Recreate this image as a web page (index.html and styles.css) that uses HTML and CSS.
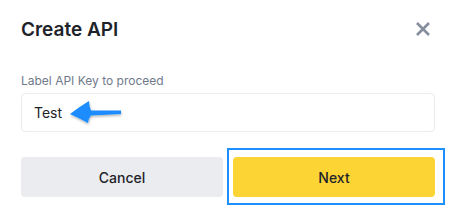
FILE: index.html
```html
<!DOCTYPE html>
<html lang="en">
<head>
    <meta charset="UTF-8">
    <title>Create API</title>
    <link rel="stylesheet" href="styles.css">
</head>
<body>
    <div class="dialog">
        <div class="dialog-header">
            <h2>Create API</h2>
            <button class="close-btn" aria-label="Close">
                <svg width="14" height="14" viewBox="0 0 14 14">
                    <path d="M1 1 L13 13 M13 1 L1 13" stroke="#848e9c" stroke-width="2.6"/>
                </svg>
            </button>
        </div>

        <label class="field-label" for="labelInput">Label API Key to proceed</label>
        <div class="field">
            <input type="text" id="labelInput" value="Test">
            <!-- annotation arrow -->
            <svg class="hint-arrow" width="60" height="30" viewBox="0 0 60 30">
                <defs>
                    <filter id="shadow" x="-20%" y="-30%" width="140%" height="160%">
                        <feDropShadow dx="0.5" dy="1.5" stdDeviation="1" flood-color="#000" flood-opacity="0.3"/>
                    </filter>
                </defs>
                <path d="M3 15 Q12 8 22 2 Q22 7 24 11.5 L54 11.5 L54 15 L24 16.5 Q21 20 21 24 Q12 19 3 15 Z" fill="#1a8cff" filter="url(#shadow)"/>
            </svg>
        </div>

        <div class="actions">
            <button class="btn btn-cancel">Cancel</button>
            <button class="btn btn-next">Next</button>
            <div class="highlight"></div>
        </div>
    </div>
</body>
</html>
```

FILE: styles.css
```css
body {
    margin: 0;
    background: #fff;
    font-family: 'Inter', 'Liberation Sans', sans-serif;
    color: #1e2329;
}
.dialog {
    width: 456px;
    height: 216px;
    box-sizing: border-box;
    padding: 15px 21px 0;
}
.dialog-header {
    display: flex;
    align-items: center;
    justify-content: space-between;
    height: 28px;
}
.dialog-header h2 {
    margin: 0;
    font-size: 19px;
    font-weight: 600;
}
.close-btn {
    border: none;
    background: none;
    padding: 0;
    margin-right: 5px;
    width: 14px;
    height: 14px;
    display: flex;
    cursor: pointer;
}
.field-label {
    display: block;
    margin-top: 30px;
    font-size: 12px;
    line-height: 16px;
    color: #707a8a;
}
.field {
    position: relative;
    margin-top: 4px;
}
.field input {
    width: 100%;
    height: 39px;
    box-sizing: border-box;
    border: 1px solid #eaecef;
    border-radius: 4px;
    padding: 0 12px;
    font-family: inherit;
    font-size: 14px;
    color: #1e2329;
    outline: none;
}
.hint-arrow {
    position: absolute;
    left: 46px;
    top: 6px;
}
.actions {
    position: relative;
    display: flex;
    gap: 10px;
    margin-top: 25px;
}
.btn {
    flex: 1;
    height: 40px;
    border: none;
    border-radius: 4px;
    font-family: inherit;
    font-size: 14px;
    font-weight: 500;
    color: #1e2329;
    cursor: pointer;
}
.btn-cancel {
    background: #eaecef;
}
.btn-next {
    background: #fcd535;
}
.highlight {
    position: absolute;
    left: 206px;
    top: -9px;
    width: 214px;
    height: 53px;
    border: 2px solid #1e8fff;
    pointer-events: none;
}
```
